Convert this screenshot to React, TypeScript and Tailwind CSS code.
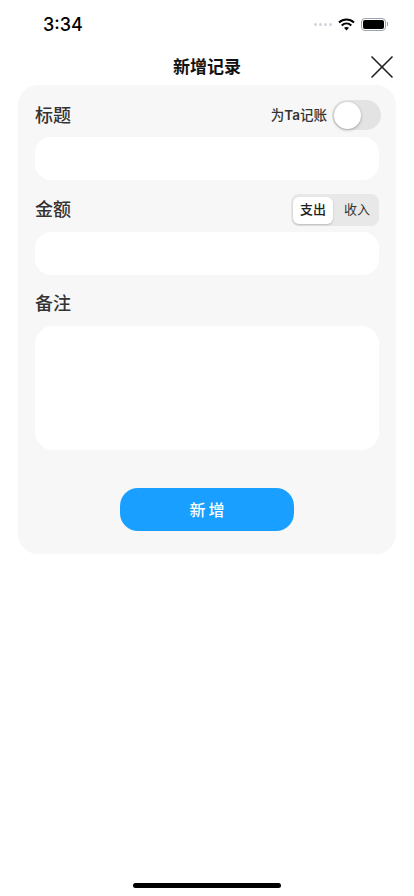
import { X } from 'lucide-react';

const font = { fontFamily: 'Inter, "Noto Sans CJK SC", sans-serif' };

function StatusBar() {
    return (
        <div className="flex h-[48px] items-center justify-between pl-[43px] pr-[26px]">
            <span className="text-[18px] font-medium text-black">3:34</span>
            <div className="flex items-center gap-[6px]">
                <div className="flex gap-[2px]">
                    <span className="h-[3px] w-[3px] rounded-full bg-gray-300" />
                    <span className="h-[3px] w-[3px] rounded-full bg-gray-300" />
                    <span className="h-[3px] w-[3px] rounded-full bg-gray-300" />
                    <span className="h-[3px] w-[3px] rounded-full bg-gray-300" />
                </div>
                <svg width="17" height="13" viewBox="0 0 17 13" fill="none" stroke="black" strokeWidth="2">
                    <path d="M1 4.6C5.4 .6 11.6 .6 16 4.6" />
                    <path d="M3.7 7.4C6.5 4.9 10.5 4.9 13.3 7.4" />
                    <path d="M8.5 12.4L6 9.8C7.4 8.6 9.6 8.6 11 9.8Z" fill="black" stroke="none" />
                </svg>
                <div className="flex items-center gap-[1px]">
                    <div className="rounded-[4px] border border-gray-400 p-[1px]">
                        <div className="h-[9px] w-[21px] rounded-[2px] bg-black" />
                    </div>
                    <span className="h-[4px] w-[1px] bg-gray-400" />
                </div>
            </div>
        </div>
    );
}

function FieldLabel({ text }: { text: string }) {
    return <span className="text-[18px] font-medium leading-[24px] text-[#333]">{text}</span>;
}

export default function App() {
    return (
        <div className="flex h-[896px] flex-col overflow-hidden bg-white" style={font}>
            <StatusBar />

            {/* Header */}
            <div className="flex h-[37px] items-center justify-between px-[12px]">
                <span className="w-[40px]" />
                <h1 className="pt-[3px] text-[17px] font-semibold text-[#111]">新增记录</h1>
                <X className="h-[40px] w-[40px] text-[#222]" strokeWidth={1} />
            </div>

            {/* Form card */}
            <div className="mx-[18px] flex h-[469px] flex-col rounded-[20px] bg-[#f7f7f7] px-[17px] pt-[15px]">
                <div className="flex h-[30px] items-center justify-between">
                    <span className="pt-[1px]">
                        <FieldLabel text="标题" />
                    </span>
                    <div className="-mr-[2px] flex items-center gap-[5px]">
                        <span className="text-[13.5px] font-medium text-[#333]">
                            为<span className="font-semibold">Ta</span>记账
                        </span>
                        <div className="h-[30px] w-[49px] rounded-full bg-[#e3e3e3] p-[1.5px]">
                            <div className="h-[27px] w-[27px] rounded-full bg-white shadow-[0_1px_3px_rgba(0,0,0,0.3)]" />
                        </div>
                    </div>
                </div>
                <div className="mt-[7px] h-[43px] rounded-[16px] bg-white" />

                <div className="mt-[14px] flex h-[32px] items-center justify-between">
                    <FieldLabel text="金额" />
                    <div className="flex h-[32px] w-[88px] items-center rounded-[8px] bg-[#e8e8e8] px-[2px]">
                        <div className="flex h-[27px] w-[40px] items-center justify-center rounded-[6px] bg-white text-[13px] font-medium text-[#222] shadow-[0_1px_2px_rgba(0,0,0,0.2)]">
                            支出
                        </div>
                        <div className="flex flex-1 items-center justify-center pl-[4px] text-[13px] text-[#333]">收入</div>
                    </div>
                </div>
                <div className="mt-[6px] h-[43px] rounded-[16px] bg-white" />

                <div className="mt-[17px] flex h-[24px] items-center">
                    <FieldLabel text="备注" />
                </div>
                <div className="mt-[10px] h-[124px] rounded-[18px] bg-white" />

                <button className="mx-auto mt-[38px] flex h-[43px] w-[174px] items-center justify-center rounded-[18px] bg-[#189fff] pl-[3px] pt-[1px] text-[16px] font-medium tracking-[3px] text-white">
                    新增
                </button>
            </div>

            {/* Home indicator */}
            <div className="mx-auto mb-[8px] mt-auto h-[5px] w-[148px] rounded-full bg-black" />
        </div>
    );
}
